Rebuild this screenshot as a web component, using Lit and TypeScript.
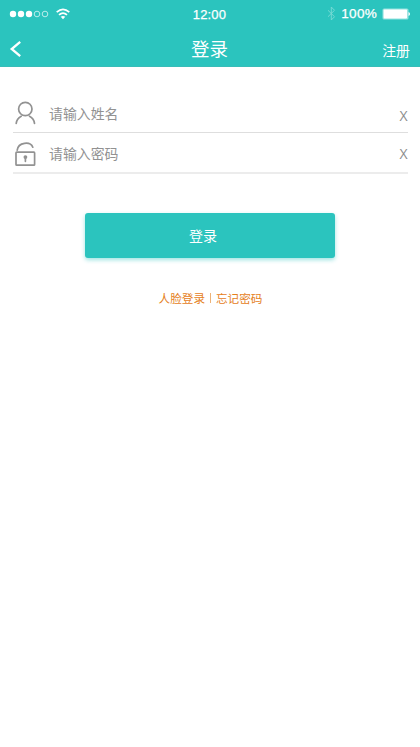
import { LitElement, html, css, svg } from "lit";
import { customElement, property } from "lit/decorators.js";

const userIcon = svg`<circle cx="12.3" cy="10" r="6.7"/><path d="M3.2 24.4C3.6 21 5.3 18.7 8.2 17.2M16.5 17.2C19.4 18.7 21.2 21 21.5 24.4"/>`;
const lockIcon = svg`<rect x="3" y="12.2" width="18.6" height="12.9" rx=".7"/><path d="M4.2 10.1C5.3 2.1 17.3 1.1 19.8 7.2"/><circle class="solid" cx="12.4" cy="17.1" r="1.9"/><path d="M12.4 17.4v3.9"/>`;

@customElement("login-field")
class LoginField extends LitElement {
  @property() icon = "user";
  @property() label = "";

  static styles = css`
    :host { display: flex; align-items: center; height: 40px; box-sizing: border-box; border-bottom: 1px solid #dedede; }
    .icon { width: 25px; height: 27px; flex: none; fill: none; stroke: #929292; stroke-width: 1.7; stroke-linecap: round; }
    .solid { fill: #929292; stroke: none; }
    .label { flex: 1; margin-left: 11px; font-size: 13.9px; line-height: 20px; color: #929292; }
    .clear { width: 9px; flex: none; padding-top: 2px; font: 14px/16px "Open Sans", sans-serif; text-align: center; color: #8c8c8c; }
    .user { padding-top: 6px; }
  `;

  render() {
    const isUser = this.icon === "user";
    return html`
      <svg class="icon" viewBox="0 0 25 27">${isUser ? userIcon : lockIcon}</svg>
      <span class="label">${this.label}</span>
      <span class="clear ${isUser ? "user" : ""}">X</span>
    `;
  }
}

@customElement("app-root")
class AppRoot extends LitElement {
  static styles = css`
    :host { display: block; height: 747px; background: #fff; color: #fff; font-family: "Noto Sans CJK SC", sans-serif; overflow: hidden; }
    .header { height: 67px; box-sizing: border-box; background: #2bc4be; border-bottom: 1px solid #38bdb8; }
    .status { display: grid; grid-template-columns: 1fr auto 1fr; align-items: center; height: 27px; padding: 0 10px 0 9px; }
    .signal { display: flex; align-items: center; }
    .dots { width: 40px; height: 10px; fill: #fff; }
    .ring { fill: none; stroke: #c9f1ef; stroke-width: .9; }
    .wifi { width: 14px; height: 12px; margin-left: 7px; fill: none; stroke: #fff; stroke-width: 1.7; }
    .solid { fill: #fff; stroke: none; }
    .time, .percent { font: 13px/16px "Liberation Sans", sans-serif; letter-spacing: .15px; -webkit-text-stroke: .25px #fff; }
    .time { padding-top: 2px; }
    .power { display: flex; align-items: center; justify-content: flex-end; }
    .bluetooth { width: 9px; height: 15px; fill: none; stroke: #7bdbd6; stroke-width: .9; margin-right: 5px; }
    .percent { font-size: 13.5px; letter-spacing: .3px; }
    .battery { width: 28px; height: 12px; margin-left: 5px; }
    .shell { fill: #95e2df; }
    .nav { display: grid; grid-template-columns: 1fr auto 1fr; align-items: center; height: 39px; padding: 4px 10px 0 9px; box-sizing: border-box; }
    .back { width: 13px; height: 18px; fill: none; stroke: #fff; stroke-width: 2.3; }
    .title { font-size: 18.5px; line-height: 26px; padding-bottom: 1px; }
    .register { font-size: 13.9px; line-height: 20px; text-align: right; padding-top: 3px; }
    .form { display: flex; flex-direction: column; padding: 26px 12px 0 13px; }
    .form login-field + login-field { height: 41px; padding-top: 1px; border-bottom: 2px solid #ececec; }
    .login { display: flex; align-items: center; justify-content: center; width: 250px; height: 45px; margin: 39px auto 0; padding: 0 14px 1px 0; box-sizing: border-box; border: 0; border-radius: 3px; background: #2bc4be; box-shadow: 0 2px 4px rgba(43,196,190,.45); color: #fff; font: 14px/20px "Noto Sans CJK SC", sans-serif; }
    .links { display: flex; align-items: center; justify-content: center; margin-top: 31px; padding-left: 1px; font-size: 11.6px; line-height: 18px; color: #e5801b; }
    .divider { width: 1px; height: 10px; margin: 0 5px; background: #edb277; }
  `;

  render() {
    return html`
      <header class="header">
        <div class="status">
          <div class="signal">
            <svg class="dots" viewBox="0 0 40 10">
              ${[4, 12, 20].map((x) => svg`<circle cx=${x} cy="5" r="3.2"/>`)}
              ${[28, 36].map((x) => svg`<circle class="ring" cx=${x} cy="5" r="2.8"/>`)}
            </svg>
            <svg class="wifi" viewBox="0 0 14 12">
              <path d="M.7 4.2Q7-1.5 13.3 4.2M3 6.9Q7 3.3 11 6.9"/>
              <path class="solid" d="M4.7 8.8Q7 7 9.3 8.8L7 11.2Z"/>
            </svg>
          </div>
          <span class="time">12:00</span>
          <div class="power">
            <svg class="bluetooth" viewBox="0 0 9 15"><path d="M1 4.3L7.5 10.7L4.3 14V1L7.5 4.3L1 10.7"/></svg>
            <span class="percent">100%</span>
            <svg class="battery" viewBox="0 0 28 12">
              <rect class="shell" x=".5" y=".5" width="26" height="11" rx="1.5"/>
              <rect class="solid" x="1.6" y="1.6" width="23.5" height="8.8" rx=".8"/>
              <path class="solid" d="M26.5 4Q28 4.5 28 6T26.5 8Z"/>
            </svg>
          </div>
        </div>
        <nav class="nav">
          <svg class="back" viewBox="0 0 13 18"><path d="M11.2 1.8L2.7 9L11.2 16.2"/></svg>
          <span class="title">登录</span>
          <span class="register">注册</span>
        </nav>
      </header>
      <main>
        <section class="form">
          <login-field icon="user" label="请输入姓名"></login-field>
          <login-field icon="lock" label="请输入密码"></login-field>
        </section>
        <button class="login">登录</button>
        <div class="links"><span>人脸登录</span><i class="divider"></i><span>忘记密码</span></div>
      </main>
    `;
  }
}
